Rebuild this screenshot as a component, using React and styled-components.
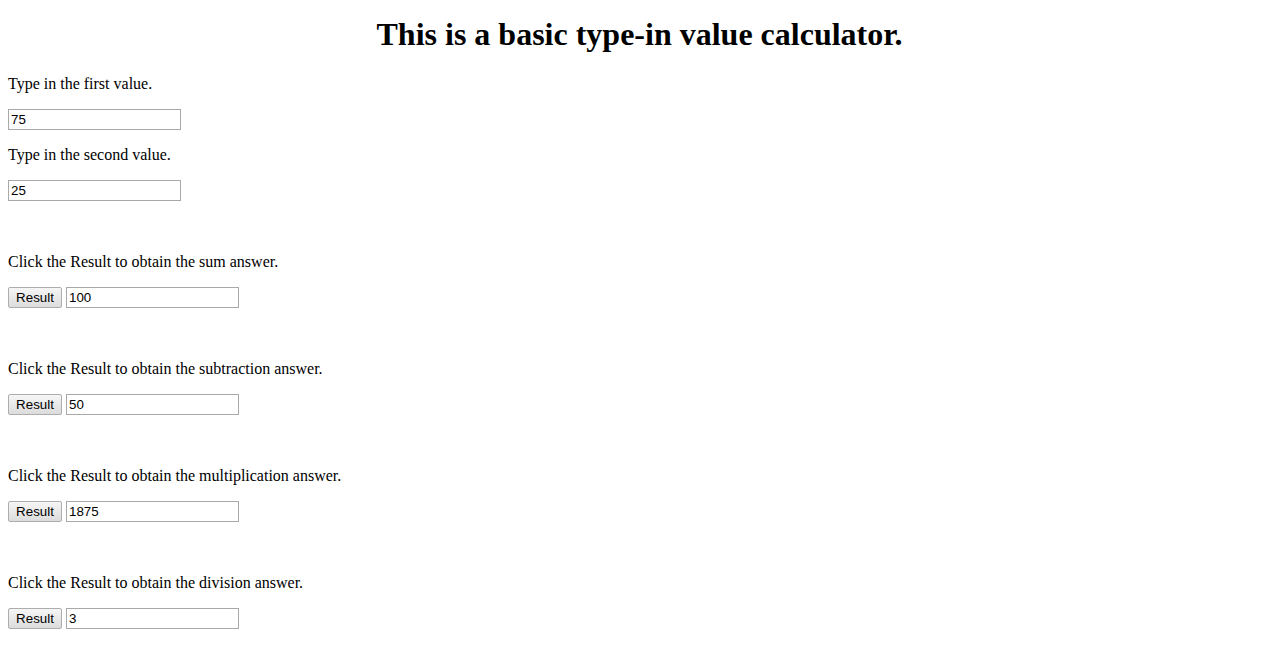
import React, { useState } from "react";
import styled, { createGlobalStyle } from "styled-components";

const GlobalStyle = createGlobalStyle`
  body {
    margin: 0;
    background: #ffffff;
    font-family: "Liberation Serif", "Times New Roman", serif;
    font-size: 16px;
    color: #000;
  }
`;

const Page = styled.div`
  padding: 0 8px 40px;
  display: flex;
  flex-direction: column;
`;

const Title = styled.h1`
  margin: 16px 0 22px;
  font-size: 32px;
  line-height: 37px;
  font-weight: bold;
  text-align: center;
`;

const Block = styled.div`
  display: flex;
  flex-direction: column;
  gap: 16px;
  margin-top: ${(p) => p.$space}px;
`;

const Label = styled.p`
  margin: 0;
  line-height: 18px;
`;

const Row = styled.div`
  display: flex;
  align-items: center;
  gap: 4px;
  height: 21px;
`;

const Field = styled.input`
  box-sizing: border-box;
  width: 173px;
  height: 21px;
  padding: 1px 2px;
  border: 1px solid #a9a9a9;
  font-family: "Liberation Sans", Arial, sans-serif;
  font-size: 13.33px;
  color: #000;
  background: #fff;
  outline: none;
`;

const Button = styled.button`
  box-sizing: border-box;
  width: 54px;
  height: 21px;
  padding: 1px 6px;
  border: 1px solid #adadad;
  border-radius: 2px;
  background: linear-gradient(#f6f6f6, #dcdcdc);
  font-family: "Liberation Sans", Arial, sans-serif;
  font-size: 13.33px;
  color: #000;
  cursor: pointer;
`;

const ops = [
  { name: "sum", fn: (a, b) => a + b },
  { name: "subtraction", fn: (a, b) => a - b },
  { name: "multiplication", fn: (a, b) => a * b },
  { name: "division", fn: (a, b) => a / b },
];

export default function App() {
  const [first, setFirst] = useState("75");
  const [second, setSecond] = useState("25");
  const [results, setResults] = useState(["100", "50", "1875", "3"]);

  const calc = (i) => {
    const val = ops[i].fn(parseFloat(first), parseFloat(second));
    setResults((prev) => prev.map((r, j) => (j === i ? String(val) : r)));
  };

  return (
    <Page>
      <GlobalStyle />
      <Title>This is a basic type-in value calculator.</Title>
      <Block $space={0}>
        <Label>Type in the first value.</Label>
        <Row>
          <Field value={first} onChange={(e) => setFirst(e.target.value)} />
        </Row>
      </Block>
      <Block $space={16}>
        <Label>Type in the second value.</Label>
        <Row>
          <Field value={second} onChange={(e) => setSecond(e.target.value)} />
        </Row>
      </Block>
      {ops.map((op, i) => (
        <Block key={op.name} $space={52}>
          <Label>Click the Result to obtain the {op.name} answer.</Label>
          <Row>
            <Button onClick={() => calc(i)}>Result</Button>
            <Field value={results[i]} readOnly />
          </Row>
        </Block>
      ))}
    </Page>
  );
}
